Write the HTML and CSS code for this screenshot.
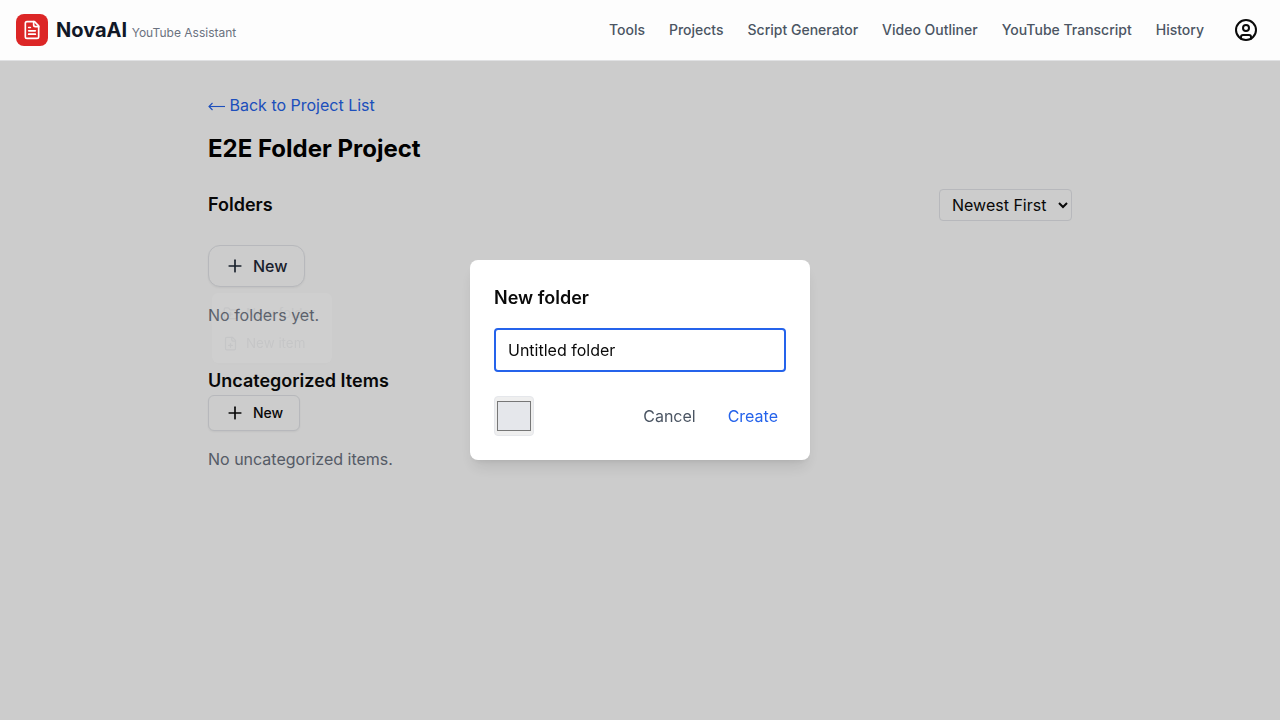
FILE: index.html
```html
<!DOCTYPE html>
<html lang="en">
<head>
<meta charset="utf-8">
<title>NovaAI</title>
<link rel="stylesheet" href="styles.css">
</head>
<body>
<header class="topbar">
  <a class="brand">
    <span class="brand-mark">
      <svg width="20" height="20" viewBox="0 0 24 24" fill="none" stroke="currentColor" stroke-width="2" stroke-linecap="round" stroke-linejoin="round"><path d="M15 2H6a2 2 0 0 0-2 2v16a2 2 0 0 0 2 2h12a2 2 0 0 0 2-2V7Z"/><path d="M14 2v4a2 2 0 0 0 2 2h4"/><path d="M10 9H8"/><path d="M16 13H8"/><path d="M16 17H8"/></svg>
    </span>
    <span class="brand-text"><span class="brand-name">NovaAI</span><span class="brand-sub">YouTube Assistant</span></span>
  </a>
  <nav class="nav">
    <a>Tools</a><a>Projects</a><a>Script Generator</a><a>Video Outliner</a><a>YouTube Transcript</a><a>History</a>
    <span class="account">
      <svg width="24" height="24" viewBox="0 0 24 24" fill="none" stroke="currentColor" stroke-width="2" stroke-linecap="round" stroke-linejoin="round"><circle cx="12" cy="12" r="10"/><circle cx="12" cy="10" r="3"/><path d="M7 20.662V19a2 2 0 0 1 2-2h6a2 2 0 0 1 2 2v1.662"/></svg>
    </span>
  </nav>
</header>
<main class="page">
  <a class="back"><svg class="arrow" width="17" height="24" viewBox="0 0 17 24" fill="none" stroke="currentColor" stroke-width="1.1"><path d="M1 13.5h16"/><path d="M4.5 10 1 13.5 4.5 17"/></svg>Back to Project List</a>
  <h1 class="title">E2E Folder Project</h1>
  <div class="section-head">
    <h2>Folders</h2>
    <select class="sort"><option>Newest First</option></select>
  </div>
  <div class="menu-anchor">
    <button class="new-btn new-btn-lg">
      <svg width="20" height="20" viewBox="0 0 24 24" fill="none" stroke="currentColor" stroke-width="2" stroke-linecap="round" stroke-linejoin="round"><path d="M5 12h14"/><path d="M12 5v14"/></svg>New
    </button>
    <div class="menu">
      <div class="menu-item menu-item-active"><svg width="15" height="15" viewBox="0 0 24 24" fill="none" stroke="currentColor" stroke-width="2" stroke-linecap="round" stroke-linejoin="round"><path d="M12 10v6"/><path d="M9 13h6"/><path d="M20 20a2 2 0 0 0 2-2V8a2 2 0 0 0-2-2h-7.9a2 2 0 0 1-1.69-.9L9.6 3.9A2 2 0 0 0 7.93 3H4a2 2 0 0 0-2 2v13a2 2 0 0 0 2 2Z"/></svg>New folder</div>
      <div class="menu-item"><svg width="15" height="15" viewBox="0 0 24 24" fill="none" stroke="currentColor" stroke-width="2" stroke-linecap="round" stroke-linejoin="round"><path d="M15 2H6a2 2 0 0 0-2 2v16a2 2 0 0 0 2 2h12a2 2 0 0 0 2-2V7Z"/><path d="M14 2v4a2 2 0 0 0 2 2h4"/><path d="M9 15h6"/><path d="M12 18v-6"/></svg>New item</div>
    </div>
  </div>
  <p class="empty">No folders yet.</p>
  <h2 class="uncat">Uncategorized Items</h2>
  <button class="new-btn new-btn-sm">
    <svg width="20" height="20" viewBox="0 0 24 24" fill="none" stroke="currentColor" stroke-width="2" stroke-linecap="round" stroke-linejoin="round"><path d="M5 12h14"/><path d="M12 5v14"/></svg>New
  </button>
  <p class="empty">No uncategorized items.</p>
</main>
<div class="overlay">
  <div class="dialog">
    <h2 class="dialog-title">New folder</h2>
    <input class="name-input" type="text" value="Untitled folder">
    <div class="dialog-foot">
      <span class="swatch"><span class="swatch-color"></span></span>
      <div class="actions"><button class="action cancel">Cancel</button><button class="action create">Create</button></div>
    </div>
  </div>
</div>
</body>
</html>
```

FILE: styles.css
```css
* { box-sizing: border-box; }
body { margin: 0; background: #fff; color: #0a0a0a; font-family: Inter, sans-serif; font-size: 16px; line-height: 24px; }
h1, h2, p { margin: 0; }
button, input, select { font: inherit; color: inherit; }
svg { display: block; flex: none; }

.topbar { position: relative; z-index: 20; height: 61px; padding: 0 16px; display: flex; align-items: center; justify-content: space-between; background: #fdfdfd; border-bottom: 1px solid #e0e1e3; }
.brand { display: flex; align-items: center; gap: 8px; }
.brand-mark { width: 32px; height: 32px; border-radius: 8px; background: #dc2626; color: #fff; display: flex; align-items: center; justify-content: center; }
.brand-text { display: flex; align-items: baseline; gap: 4.6px; }
.brand-name { font-size: 20px; line-height: 28px; font-weight: 700; color: #111827; }
.brand-sub { font-size: 12px; line-height: 16px; color: #6b7280; }
.nav { display: flex; align-items: center; gap: 24px; font-size: 14px; line-height: 20px; font-weight: 500; color: #4b5563; }
.account { padding: 0 6px; color: #0a0a0a; }

.page { width: 896px; margin: 0 auto; padding: 32px 16px; }
.back { display: flex; gap: 4.5px; height: 24px; color: #2563eb; }
.title { margin-top: 16px; font-size: 24px; line-height: 32px; font-weight: 700; color: #000; }
.section-head { display: flex; align-items: center; justify-content: space-between; margin-top: 24px; }
h2 { font-size: 18px; line-height: 28px; font-weight: 600; }
.sort { width: 133px; height: 32px; padding: 0 8px; border: 1px solid #e5e7eb; border-radius: 4px; background: transparent; }
.menu-anchor { position: relative; margin-top: 24px; }
.new-btn { display: flex; align-items: center; gap: 8px; background: #fff; border: 1px solid #e5e7eb; font-weight: 500; }
.new-btn-lg { width: 97px; height: 42px; padding: 0 16px; border-radius: 12px; color: #1f2937; box-shadow: 0 1px 2px rgba(0,0,0,.05); }
.new-btn-sm { width: 92px; height: 36px; padding: 0 16px; border-radius: 6px; font-size: 14px; box-shadow: 0 1px 2px rgba(0,0,0,.05); }
.menu { position: absolute; left: 4px; top: 48px; width: 120px; height: 70px; padding: 5px 4px; border-radius: 6px; background: #fff; color: #6b7280; opacity: .07; z-index: 12; box-shadow: 0 4px 6px -1px rgba(0,0,0,.1); }
.menu-item { display: flex; align-items: center; gap: 8px; height: 30px; padding: 0 7px; border-radius: 4px; font-size: 13.4px; white-space: nowrap; }
.menu-item-active { background: #f3f4f6; }
.empty { margin-top: 16px; color: #6b7280; }
.uncat { margin-top: 40px; }

.overlay { position: fixed; inset: 0; z-index: 10; background: rgba(0,0,0,.2); display: flex; align-items: center; justify-content: center; }
.dialog { width: 340px; height: 200px; padding: 24px; border-radius: 8px; background: #fff; box-shadow: 0 10px 15px -3px rgba(0,0,0,.1), 0 4px 6px -4px rgba(0,0,0,.1); }
.name-input { display: block; width: 100%; height: 44px; margin-top: 16px; padding: 0 12px; border: 2px solid #2563eb; border-radius: 4px; outline: none; background: #fff; }
.dialog-foot { display: flex; align-items: center; justify-content: space-between; margin-top: 24px; }
.swatch { width: 40px; height: 40px; padding: 4px 2px; border: 1px solid #e5e7eb; border-radius: 4px; background: #efefef; }
.swatch-color { display: block; height: 30px; border: 1px solid #777; background: #e5e7eb; }
.actions { display: flex; gap: 16px; }
.action { padding: 0 8px; border: 0; background: transparent; }
.cancel { color: #4b5563; }
.create { color: #2563eb; }
```
